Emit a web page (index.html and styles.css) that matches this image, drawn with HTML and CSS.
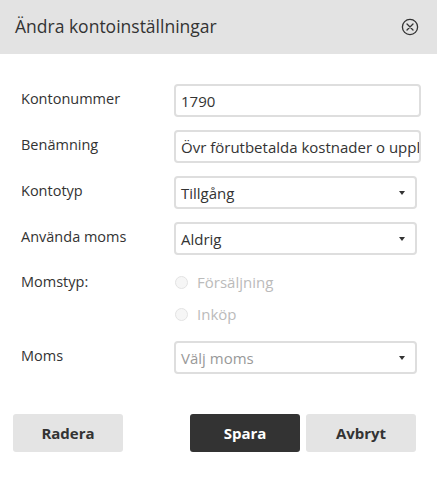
FILE: index.html
```html
<!DOCTYPE html>
<html lang="sv">
<head>
<meta charset="utf-8">
<title>Ändra kontoinställningar</title>
<link rel="stylesheet" href="styles.css">
</head>
<body>
<div class="dialog">
  <div class="header">
    <span class="title">Ändra kontoinställningar</span>
    <svg class="close" width="18" height="18" viewBox="0 0 18 18">
      <circle cx="9" cy="9" r="7.6" fill="none" stroke="#333" stroke-width="1.3"/>
      <path d="M6 6 L12 12 M12 6 L6 12" stroke="#333" stroke-width="1.3" stroke-linecap="round"/>
    </svg>
  </div>
  <div class="form">
    <div class="row">
      <label class="label">Kontonummer</label>
      <input class="field input" type="text" value="1790" readonly>
    </div>
    <div class="row">
      <label class="label">Benämning</label>
      <input class="field input" type="text" value="Övr förutbetalda kostnader o upplupna intäkter" readonly>
    </div>
    <div class="row">
      <label class="label">Kontotyp</label>
      <div class="field select"><span>Tillgång</span><span class="caret"></span></div>
    </div>
    <div class="row">
      <label class="label">Använda moms</label>
      <div class="field select"><span>Aldrig</span><span class="caret"></span></div>
    </div>
    <div class="row radios-row">
      <label class="label">Momstyp:</label>
      <div class="radios">
        <div class="radio"><span class="dot"></span>Försäljning</div>
        <div class="radio"><span class="dot"></span>Inköp</div>
      </div>
    </div>
    <div class="row">
      <label class="label">Moms</label>
      <div class="field select placeholder"><span>Välj moms</span><span class="caret"></span></div>
    </div>
  </div>
  <div class="actions">
    <button class="btn">Radera</button>
    <div class="right">
      <button class="btn primary">Spara</button>
      <button class="btn">Avbryt</button>
    </div>
  </div>
</div>
</body>
</html>
```
FILE: styles.css
```css
* { box-sizing: border-box; }
html, body { margin: 0; padding: 0; background: #fff; }
body {
  font-family: "Open Sans", "Liberation Sans", sans-serif;
  color: #333;
  width: 437px;
  height: 487px;
  overflow: hidden;
}
.header {
  height: 54px;
  background: #e3e3e3;
  display: flex;
  align-items: center;
  justify-content: space-between;
  padding: 0 18px 0 15px;
}
.title {
  font-size: 17.5px;
  color: #333;
  margin-top: -2px;
}
.close { display: block; margin-top: -1px; }
.form {
  padding: 30px 0 0 21px;
  display: flex;
  flex-direction: column;
  gap: 13px;
}
.row {
  display: flex;
  align-items: center;
}
.label {
  width: 153px;
  flex: none;
  font-size: 14.5px;
  color: #333;
  margin-top: -4px;
}
.field {
  height: 33px;
  border: 2px solid #dedede;
  border-radius: 4px;
  font-family: "Open Sans", "Liberation Sans", sans-serif;
  font-size: 15px;
  color: #333;
  padding: 0 0 0 5px;
  display: flex;
  align-items: center;
  white-space: nowrap;
  overflow: hidden;
  background: #fff;
  outline: none;
  margin: 0;
}
.input { width: 247px; }
.select {
  width: 243px;
  justify-content: space-between;
  padding-right: 10px;
}
.placeholder { color: #999; }
.caret {
  width: 0; height: 0;
  border-left: 3.5px solid transparent;
  border-right: 3.5px solid transparent;
  border-top: 4px solid #333;
}
.radios-row { align-items: flex-start; margin-top: 3px; margin-bottom: 3px; }
.radios-row .label { margin-top: 1px; }
.radios {
  display: flex;
  flex-direction: column;
  gap: 10px;
}
.radio {
  display: flex;
  align-items: center;
  font-size: 15px;
  color: #bbb;
  height: 22px;
}
.dot {
  width: 13px; height: 13px;
  border-radius: 50%;
  border: 1px solid #e3e3e3;
  background: #f6f6f6;
  margin: 0 9px 0 1px;
}
.actions {
  display: flex;
  justify-content: space-between;
  padding: 40px 21px 0 13px;
}
.right { display: flex; gap: 6px; }
.btn {
  width: 110px;
  height: 38px;
  border: none;
  border-radius: 3px;
  background: #e4e4e4;
  color: #333;
  font-family: "Open Sans", "Liberation Sans", sans-serif;
  font-weight: 700;
  font-size: 15px;
  padding: 0;
}
.btn.primary { background: #333; color: #fff; }
```
